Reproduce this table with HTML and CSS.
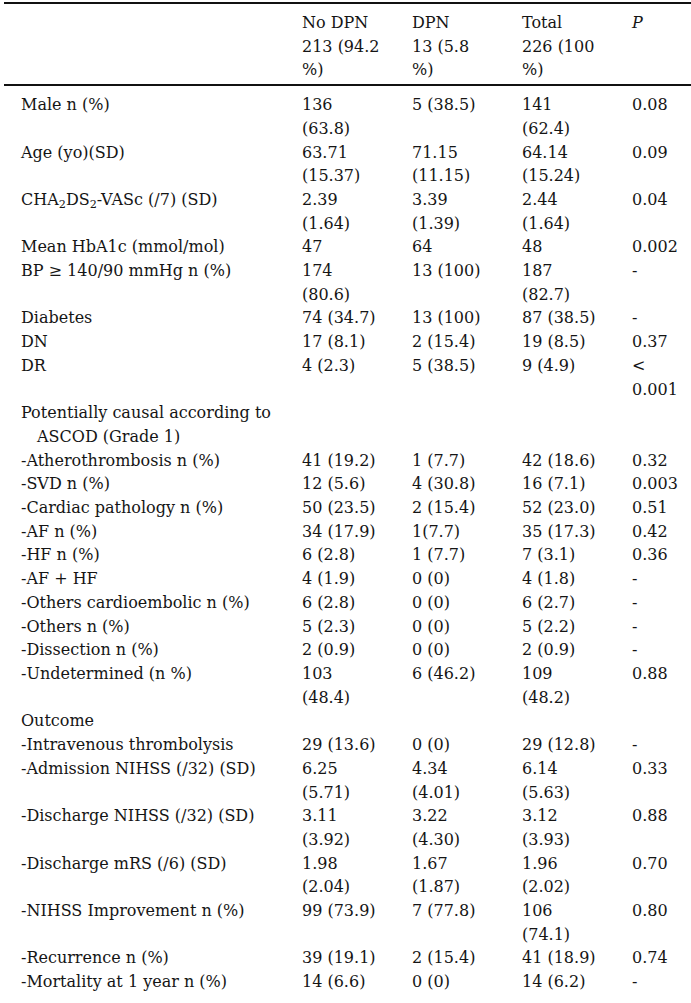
FILE: index.html
```html
<!DOCTYPE html>
<html lang="en">
<head>
<meta charset="utf-8">
<title>Table</title>
<link rel="stylesheet" href="styles.css">
</head>
<body>
<table class="tbl">
  <colgroup>
    <col class="c-label">
    <col class="c-num">
    <col class="c-num">
    <col class="c-num">
    <col class="c-p">
  </colgroup>
  <thead>
    <tr>
      <th></th>
      <th>No DPN<br>213 (94.2 %)</th>
      <th>DPN<br>13 (5.8 %)</th>
      <th>Total<br>226 (100 %)</th>
      <th><i>P</i></th>
    </tr>
  </thead>
  <tbody>
    <tr class="first"><td>Male n (%)</td><td>136 (63.8)</td><td>5 (38.5)</td><td>141 (62.4)</td><td>0.08</td></tr>
    <tr><td>Age (yo)(SD)</td><td>63.71 (15.37)</td><td>71.15 (11.15)</td><td>64.14 (15.24)</td><td>0.09</td></tr>
    <tr><td>CHA<sub>2</sub>DS<sub>2</sub>-VASc (/7) (SD)</td><td>2.39 (1.64)</td><td>3.39 (1.39)</td><td>2.44 (1.64)</td><td>0.04</td></tr>
    <tr><td>Mean HbA1c (mmol/mol)</td><td>47</td><td>64</td><td>48</td><td>0.002</td></tr>
    <tr><td>BP &ge; 140/90 mmHg n (%)</td><td>174 (80.6)</td><td>13 (100)</td><td>187 (82.7)</td><td>-</td></tr>
    <tr><td>Diabetes</td><td>74 (34.7)</td><td>13 (100)</td><td>87 (38.5)</td><td>-</td></tr>
    <tr><td>DN</td><td>17 (8.1)</td><td>2 (15.4)</td><td>19 (8.5)</td><td>0.37</td></tr>
    <tr><td>DR</td><td>4 (2.3)</td><td>5 (38.5)</td><td>9 (4.9)</td><td>&lt; 0.001</td></tr>
    <tr><td>Potentially causal according to ASCOD (Grade 1)</td><td></td><td></td><td></td><td></td></tr>
    <tr><td>-Atherothrombosis n (%)</td><td>41 (19.2)</td><td>1 (7.7)</td><td>42 (18.6)</td><td>0.32</td></tr>
    <tr><td>-SVD n (%)</td><td>12 (5.6)</td><td>4 (30.8)</td><td>16 (7.1)</td><td>0.003</td></tr>
    <tr><td>-Cardiac pathology n (%)</td><td>50 (23.5)</td><td>2 (15.4)</td><td>52 (23.0)</td><td>0.51</td></tr>
    <tr><td>-AF n (%)</td><td>34 (17.9)</td><td>1(7.7)</td><td>35 (17.3)</td><td>0.42</td></tr>
    <tr><td>-HF n (%)</td><td>6 (2.8)</td><td>1 (7.7)</td><td>7 (3.1)</td><td>0.36</td></tr>
    <tr><td>-AF + HF</td><td>4 (1.9)</td><td>0 (0)</td><td>4 (1.8)</td><td>-</td></tr>
    <tr><td>-Others cardioembolic n (%)</td><td>6 (2.8)</td><td>0 (0)</td><td>6 (2.7)</td><td>-</td></tr>
    <tr><td>-Others n (%)</td><td>5 (2.3)</td><td>0 (0)</td><td>5 (2.2)</td><td>-</td></tr>
    <tr><td>-Dissection n (%)</td><td>2 (0.9)</td><td>0 (0)</td><td>2 (0.9)</td><td>-</td></tr>
    <tr><td>-Undetermined (n %)</td><td>103 (48.4)</td><td>6 (46.2)</td><td>109 (48.2)</td><td>0.88</td></tr>
    <tr><td>Outcome</td><td></td><td></td><td></td><td></td></tr>
    <tr><td>-Intravenous thrombolysis</td><td>29 (13.6)</td><td>0 (0)</td><td>29 (12.8)</td><td>-</td></tr>
    <tr><td>-Admission NIHSS (/32) (SD)</td><td>6.25 (5.71)</td><td>4.34 (4.01)</td><td>6.14 (5.63)</td><td>0.33</td></tr>
    <tr><td>-Discharge NIHSS (/32) (SD)</td><td>3.11 (3.92)</td><td>3.22 (4.30)</td><td>3.12 (3.93)</td><td>0.88</td></tr>
    <tr><td>-Discharge mRS (/6) (SD)</td><td>1.98 (2.04)</td><td>1.67 (1.87)</td><td>1.96 (2.02)</td><td>0.70</td></tr>
    <tr><td>-NIHSS Improvement n (%)</td><td>99 (73.9)</td><td>7 (77.8)</td><td>106 (74.1)</td><td>0.80</td></tr>
    <tr><td>-Recurrence n (%)</td><td>39 (19.1)</td><td>2 (15.4)</td><td>41 (18.9)</td><td>0.74</td></tr>
    <tr><td>-Mortality at 1 year n (%)</td><td>14 (6.6)</td><td>0 (0)</td><td>14 (6.2)</td><td>-</td></tr>
  </tbody>
</table>
</body>
</html>
```

FILE: styles.css
```css
html, body {
  margin: 0;
  padding: 0;
  background: #ffffff;
}

body {
  padding: 2px 0 0 4px;
  font-family: "DejaVu Serif", "Liberation Serif", serif;
  font-size: 16px;
  color: #151515;
}

.tbl {
  border-collapse: collapse;
  table-layout: fixed;
  width: 687px;
}

.c-label { width: 298px; }
.c-num { width: 110px; }
.c-p { width: 59px; }

.tbl th,
.tbl td {
  text-align: left;
  vertical-align: top;
  font-weight: normal;
  line-height: 23.7px;
  padding: 0 28px 0 0;
}

.tbl th:first-child,
.tbl td:first-child {
  padding-left: 17px;
  padding-right: 10px;
  text-indent: -16px;
}

.tbl td:first-child {
  padding-left: 33px;
}

.tbl th:last-child,
.tbl td:last-child {
  padding-right: 0;
}

.tbl thead tr {
  border-top: 2px solid #111;
  border-bottom: 2px solid #111;
}

.tbl thead th {
  padding-top: 7px;
  padding-bottom: 2px;
}

.tbl tbody tr.first td {
  padding-top: 7px;
}

.tbl sub {
  font-size: 0.7em;
  line-height: 0;
  vertical-align: -0.3em;
}
```
